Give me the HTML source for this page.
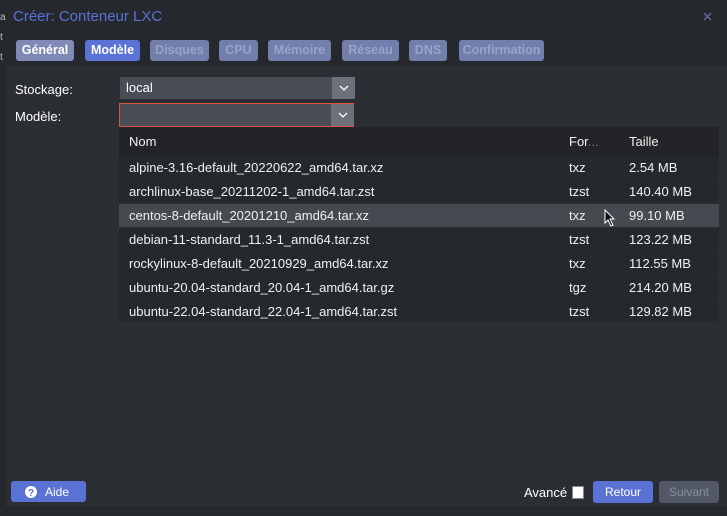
<!DOCTYPE html>
<html><head><style>
*{margin:0;padding:0;box-sizing:border-box}
body{width:727px;height:516px;background:#25282c;font-family:"Liberation Sans",sans-serif;font-size:13px;color:#fff;position:relative;overflow:hidden}
.a{position:absolute}
.tab{position:absolute;top:40px;height:21px;border-radius:3px;background:#727fad;color:#9aa3c6;font-weight:bold;font-size:12.5px;line-height:21px;text-align:center}
.row{position:absolute;left:119px;width:600px;height:23px;line-height:23px;background:#25282c;color:#f0f0f0}
.row span{position:absolute}
.chev{position:absolute;width:23px;height:22px;background:#6c707a}
.chev svg{position:absolute;left:7px;top:8px}
</style></head><body>
<div class="a" style="left:13px;top:8px;font-size:15px;color:#5a72d8">Créer: Conteneur LXC</div>
<svg class="a" style="left:703px;top:12px" width="9" height="9"><path d="M1 1L8 8M8 1L1 8" stroke="#5f6a9a" stroke-width="1.5"/></svg>
<div class="a" style="left:0;top:8px;font-size:10px;color:#bbb;line-height:20px">a<br>t<br>t</div>
<div class="tab" style="left:16px;width:58px;background:#7f8ab6;color:#fff">Général</div>
<div class="tab" style="left:85px;width:55px;background:#5b72d6;color:#fff">Modèle</div>
<div class="tab" style="left:150px;width:59px">Disques</div>
<div class="tab" style="left:219px;width:39px">CPU</div>
<div class="tab" style="left:268px;width:63px">Mémoire</div>
<div class="tab" style="left:342px;width:57px">Réseau</div>
<div class="tab" style="left:409px;width:38px">DNS</div>
<div class="tab" style="left:459px;width:85px">Confirmation</div>
<div class="a" style="left:6px;top:67px;width:721px;height:440px;background:#2b2e33"></div>
<div class="a" style="left:15px;top:82px">Stockage:</div>
<div class="a" style="left:15px;top:109px">Modèle:</div>
<div class="a" style="left:120px;top:77px;width:235px;height:22px;background:#4a4d55;padding-left:6px;line-height:22px">local</div>
<div class="chev" style="left:332px;top:77px"><svg width="10" height="6"><path d="M1 1L5 5L9 1" stroke="#fff" stroke-width="1.3" fill="none"/></svg></div>
<div class="a" style="left:119px;top:103px;width:235px;height:24px;background:#4a4d55;border:1px solid #d9553e"></div>
<div class="chev" style="left:331px;top:104px"><svg width="10" height="6"><path d="M1 1L5 5L9 1" stroke="#fff" stroke-width="1.3" fill="none"/></svg></div>
<div class="row" style="top:127px;height:29px;line-height:29px;background:#222427"><span style="left:10px">Nom</span><span style="left:450px">For<span style="color:#777;position:static">...</span></span><span style="left:510px">Taille</span></div>
<div class="row" style="top:156px"><span style="left:10px">alpine-3.16-default_20220622_amd64.tar.xz</span><span style="left:450px">txz</span><span style="left:510px">2.54 MB</span></div>
<div class="row" style="top:180px"><span style="left:10px">archlinux-base_20211202-1_amd64.tar.zst</span><span style="left:450px">tzst</span><span style="left:510px">140.40 MB</span></div>
<div class="row" style="top:204px;background:#46494f"><span style="left:10px">centos-8-default_20201210_amd64.tar.xz</span><span style="left:450px">txz</span><span style="left:510px">99.10 MB</span></div>
<div class="row" style="top:228px"><span style="left:10px">debian-11-standard_11.3-1_amd64.tar.zst</span><span style="left:450px">tzst</span><span style="left:510px">123.22 MB</span></div>
<div class="row" style="top:252px"><span style="left:10px">rockylinux-8-default_20210929_amd64.tar.xz</span><span style="left:450px">txz</span><span style="left:510px">112.55 MB</span></div>
<div class="row" style="top:276px"><span style="left:10px">ubuntu-20.04-standard_20.04-1_amd64.tar.gz</span><span style="left:450px">tgz</span><span style="left:510px">214.20 MB</span></div>
<div class="row" style="top:300px"><span style="left:10px">ubuntu-22.04-standard_22.04-1_amd64.tar.zst</span><span style="left:450px">tzst</span><span style="left:510px">129.82 MB</span></div>
<svg class="a" style="left:604px;top:209px" width="12" height="18"><path d="M1 1 L1 14 L4 11 L7 17 L9 16 L6 10 L10 10 Z" fill="#111" stroke="#fff" stroke-width="1"/></svg>
<div class="a" style="left:11px;top:481px;width:75px;height:21px;background:#5a72d4;border-radius:3px"></div>
<svg class="a" style="left:25px;top:486px" width="12" height="12"><circle cx="6" cy="6" r="6" fill="#fff"/><text x="6" y="10" text-anchor="middle" font-family="Liberation Sans" font-weight="bold" font-size="10" fill="#5a72d4">?</text></svg>
<div class="a" style="left:45px;top:485px;font-size:12px">Aide</div>
<div class="a" style="left:524px;top:485px;font-size:13px">Avancé</div>
<div class="a" style="left:572px;top:486px;width:12px;height:13px;background:#fff;border:1px solid #888"></div>
<div class="a" style="left:593px;top:481px;width:60px;height:22px;background:#5a72d4;border-radius:3px;line-height:22px;text-align:center;font-size:12px">Retour</div>
<div class="a" style="left:659px;top:481px;width:60px;height:22px;background:#535866;border-radius:3px;line-height:22px;text-align:center;font-size:12px;color:#8a8f9c">Suivant</div>
</body></html>
